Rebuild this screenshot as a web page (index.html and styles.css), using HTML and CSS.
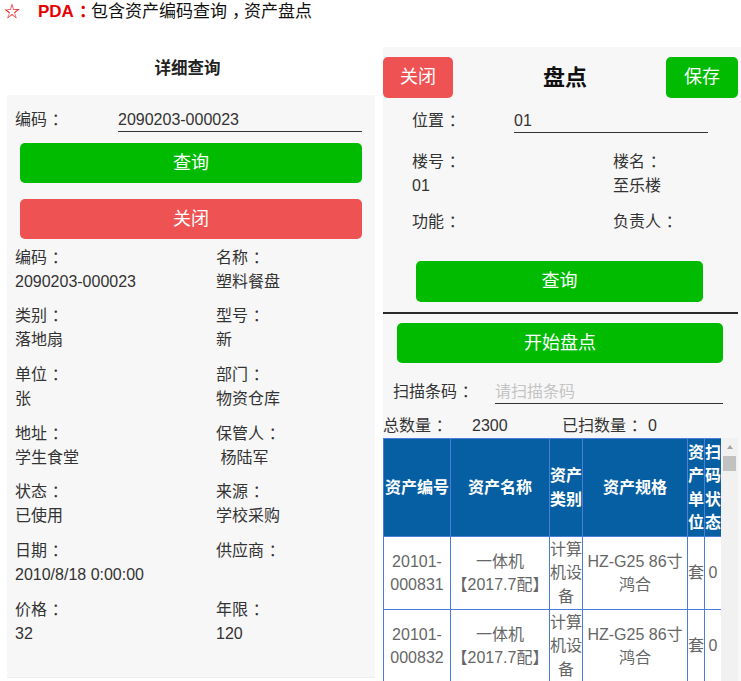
FILE: index.html
```html
<!DOCTYPE html>
<html lang="zh-CN">
<head>
<meta charset="utf-8">
<title>PDA</title>
<link rel="stylesheet" href="styles.css">
</head>
<body>
<div class="top"><span class="star">☆</span><b class="pda">PDA<span class="pn">：</span></b>包含资产编码查询<span class="pn">，</span>资产盘点</div>
<div class="panels">
  <section class="left">
    <div class="left-title">详细查询</div>
    <div class="left-body">
      <div class="search-row">
        <span class="search-label">编码<span class="pn">：</span></span>
        <span class="line-input">2090203-000023</span>
      </div>
      <div class="btn green btn-query">查询</div>
      <div class="btn red btn-close">关闭</div>
      <div class="info-grid">
        <div class="item"><div class="lbl">编码<span class="pn">：</span></div><div class="val">2090203-000023</div></div>
        <div class="item"><div class="lbl">名称<span class="pn">：</span></div><div class="val">塑料餐盘</div></div>
        <div class="item"><div class="lbl">类别<span class="pn">：</span></div><div class="val">落地扇</div></div>
        <div class="item"><div class="lbl">型号<span class="pn">：</span></div><div class="val">新</div></div>
        <div class="item"><div class="lbl">单位<span class="pn">：</span></div><div class="val">张</div></div>
        <div class="item"><div class="lbl">部门<span class="pn">：</span></div><div class="val">物资仓库</div></div>
        <div class="item"><div class="lbl">地址<span class="pn">：</span></div><div class="val">学生食堂</div></div>
        <div class="item"><div class="lbl">保管人<span class="pn">：</span></div><div class="val">&nbsp;杨陆军</div></div>
        <div class="item"><div class="lbl">状态<span class="pn">：</span></div><div class="val">已使用</div></div>
        <div class="item"><div class="lbl">来源<span class="pn">：</span></div><div class="val">学校采购</div></div>
        <div class="item"><div class="lbl">日期<span class="pn">：</span></div><div class="val">2010/8/18 0:00:00</div></div>
        <div class="item"><div class="lbl">供应商<span class="pn">：</span></div><div class="val"></div></div>
        <div class="item"><div class="lbl">价格<span class="pn">：</span></div><div class="val">32</div></div>
        <div class="item"><div class="lbl">年限<span class="pn">：</span></div><div class="val">120</div></div>
      </div>
    </div>
  </section>
  <section class="right">
    <div class="r-head">
      <div class="btn red hbtn">关闭</div>
      <div class="r-title">盘点</div>
      <div class="btn green hbtn">保存</div>
    </div>
    <div class="loc-row">
      <span class="loc-label">位置<span class="pn">：</span></span>
      <span class="loc-input">01</span>
    </div>
    <div class="r-grid">
      <div class="item"><div class="lbl">楼号<span class="pn">：</span></div><div class="val">01</div></div>
      <div class="item"><div class="lbl">楼名<span class="pn">：</span></div><div class="val">至乐楼</div></div>
      <div class="item"><div class="lbl">功能<span class="pn">：</span></div></div>
      <div class="item"><div class="lbl">负责人<span class="pn">：</span></div></div>
    </div>
    <div class="btn green r-query">查询</div>
    <div class="sep"></div>
    <div class="btn green r-start">开始盘点</div>
    <div class="scan-row">
      <span class="scan-label">扫描条码<span class="pn">：</span></span>
      <span class="scan-input">请扫描条码</span>
    </div>
    <div class="count-row">
      <span class="c-total">总数量<span class="pn">：</span></span><span class="c-num">2300</span><span class="c-scan">已扫数量<span class="pn">：</span></span><span class="c-zero">0</span>
    </div>
    <div class="table-area">
      <div class="table-wrap">
        <table class="grid">
          <colgroup>
            <col class="w1"><col class="w2"><col class="w3"><col class="w4"><col class="w5"><col class="w6">
          </colgroup>
          <thead>
            <tr>
              <th>资产编号</th>
              <th>资产名称</th>
              <th>资产<br>类别</th>
              <th>资产规格</th>
              <th>资<br>产<br>单<br>位</th>
              <th>扫<br>码<br>状<br>态</th>
            </tr>
          </thead>
          <tbody>
            <tr>
              <td>20101-<br>000831</td>
              <td>一体机<br>【2017.7配】</td>
              <td>计算<br>机设<br>备</td>
              <td>HZ-G25 86寸<br>鸿合</td>
              <td>套</td>
              <td>0</td>
            </tr>
            <tr>
              <td>20101-<br>000832</td>
              <td>一体机<br>【2017.7配】</td>
              <td>计算<br>机设<br>备</td>
              <td>HZ-G25 86寸<br>鸿合</td>
              <td>套</td>
              <td>0</td>
            </tr>
          </tbody>
        </table>
      </div>
      <div class="scrollbar">
        <div class="sb-arrow"><span class="tri"></span></div>
        <div class="sb-thumb"></div>
      </div>
    </div>
  </section>
</div>
</body>
</html>
```

FILE: styles.css
```css
html, body {
  margin: 0;
  padding: 0;
  width: 741px;
  height: 681px;
  overflow: hidden;
  background: #ffffff;
}
body {
  font-family: "Liberation Sans", "Noto Sans CJK SC", sans-serif;
  font-size: 16px;
  color: #333;
}
.pn {
  padding-left: 0.3em;
  letter-spacing: -0.3em;
  white-space: nowrap;
}
.top {
  height: 24px;
  line-height: 24px;
  font-size: 17px;
  color: #111;
  white-space: nowrap;
}
.star {
  display: inline-block;
  width: 38px;
  padding-left: 4px;
  box-sizing: border-box;
  color: #e00000;
  font-size: 16px;
}
.pda {
  color: #e60000;
  font-weight: bold;
}
.panels {
  display: flex;
  margin-top: 21px;
  height: 636px;
}
.left {
  width: 375px;
  flex: none;
  display: flex;
  flex-direction: column;
}
.left-title {
  height: 50px;
  line-height: 46px;
  text-align: center;
  font-weight: bold;
  font-size: 16.5px;
  color: #222;
}
.left-body {
  margin-left: 7px;
  height: 583px;
  background: #f7f7f7;
  padding: 0 13px 0 8px;
  box-sizing: border-box;
  border-bottom: 1px solid #eeeeee;
}
.search-row {
  display: flex;
  margin-top: 14px;
  line-height: 22px;
}
.search-label {
  width: 103px;
  flex: none;
}
.line-input {
  flex: 1;
  height: 22px;
  border-bottom: 1.5px solid #333;
}
.btn {
  color: #fff;
  text-align: center;
  border-radius: 5px;
  font-size: 18px;
}
.green { background: #00bb00; }
.red { background: #ef5252; }
.btn-query, .btn-close {
  margin-left: 5px;
  height: 40px;
  line-height: 40px;
}
.btn-query { margin-top: 10.5px; }
.btn-close { margin-top: 16px; }
.info-grid {
  display: grid;
  grid-template-columns: 201px 1fr;
  row-gap: 10.7px;
  margin-top: 7px;
}
.item .lbl, .item .val {
  line-height: 24px;
  height: 24px;
  white-space: nowrap;
}
.right {
  flex: 1;
  margin-left: 8px;
  margin-top: 2px;
  background: #f7f7f7;
  display: flex;
  flex-direction: column;
  min-height: 0;
}
.r-head {
  display: grid;
  grid-template-columns: 70px 1fr 72px;
  margin: 10px 3px 0 0;
  height: 41px;
}
.hbtn {
  height: 41px;
  line-height: 41px;
}
.r-title {
  text-align: center;
  padding-left: 11px;
  font-size: 22px;
  font-weight: bold;
  line-height: 41px;
  color: #111;
}
.loc-row {
  display: flex;
  margin-top: 12px;
  padding-left: 29px;
  line-height: 22px;
}
.loc-label {
  width: 102px;
  flex: none;
}
.loc-input {
  width: 194px;
  height: 22px;
  border-bottom: 1.5px solid #333;
}
.r-grid {
  display: grid;
  grid-template-columns: 201px 1fr;
  row-gap: 12px;
  margin-top: 16.5px;
  padding-left: 29px;
}
.r-query {
  margin-top: 27px;
  margin-left: 33px;
  width: 287px;
  height: 41px;
  line-height: 41px;
}
.sep {
  margin-top: 10px;
  margin-right: 3px;
  height: 2px;
  background: #2b2b2b;
}
.r-start {
  margin-top: 9px;
  margin-left: 14px;
  width: 326px;
  height: 40px;
  line-height: 40px;
}
.scan-row {
  display: flex;
  margin-top: 18px;
  padding-left: 10px;
  line-height: 22px;
}
.scan-label {
  width: 102px;
  flex: none;
}
.scan-input {
  width: 228px;
  height: 22px;
  color: #c4c4c4;
  border-bottom: 1.5px solid #333;
}
.count-row {
  margin-top: 11px;
  height: 22px;
  line-height: 22px;
  white-space: nowrap;
}
.count-row > span { display: inline-block; }
.c-total { width: 89px; }
.c-num { width: 90px; }
.c-scan { width: 86px; }
.table-area {
  flex: 1;
  min-height: 0;
  margin-top: 1.5px;
  display: flex;
  overflow: hidden;
}
.table-wrap {
  width: 338px;
  flex: none;
  overflow: hidden;
}
.grid {
  width: 338px;
  table-layout: fixed;
  border-collapse: collapse;
  background: #fff;
}
.w1 { width: 67px; }
.w2 { width: 99px; }
.w3 { width: 33px; }
.w4 { width: 105px; }
.w5 { width: 17px; }
.w6 { width: 17px; }
.grid th, .grid td {
  border: 1px solid #4a7ed8;
  padding: 0;
  text-align: center;
  vertical-align: middle;
  line-height: 23.5px;
  white-space: nowrap;
  overflow: hidden;
}
.grid th {
  background: #065fa3;
  color: #fff;
  font-weight: bold;
  height: 97px;
}
.grid td {
  color: #666;
  height: 72px;
}
.scrollbar {
  width: 17px;
  flex: none;
  background: #f1f1f1;
  display: flex;
  flex-direction: column;
  align-items: center;
}
.sb-arrow {
  height: 17px;
  width: 17px;
  display: flex;
  align-items: center;
  justify-content: center;
}
.tri {
  width: 0;
  height: 0;
  border-left: 3.5px solid transparent;
  border-right: 3.5px solid transparent;
  border-bottom: 4px solid #a3a3a3;
}
.sb-thumb {
  margin-top: 1px;
  width: 13px;
  height: 15px;
  background: #c1c1c1;
}
```
